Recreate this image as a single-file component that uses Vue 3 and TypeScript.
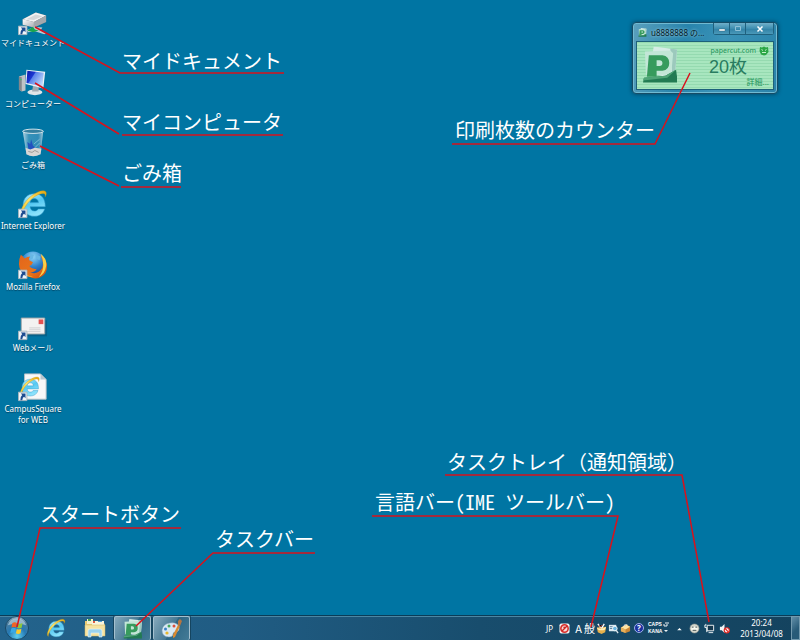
<script setup lang="ts">
interface Shortcut {
  id: string
  label: string
  linked: boolean
}

interface Callout {
  text: string
  x: number
  y: number
  lines: string[]
  halfWidth?: boolean
}

interface CalloutLayer {
  anchor: string
  callouts: Callout[]
}

const shortcuts: Shortcut[] = [
  { id: 'documents', label: 'マイドキュメント', linked: true },
  { id: 'computer', label: 'コンピューター', linked: false },
  { id: 'trash', label: 'ごみ箱', linked: false },
  { id: 'ie', label: 'Internet Explorer', linked: true },
  { id: 'firefox', label: 'Mozilla Firefox', linked: true },
  { id: 'mail', label: 'Webメール', linked: true },
  { id: 'campus', label: 'CampusSquare for WEB', linked: true },
]

// Each layer keeps its callouts attached to one corner of the screen.
const layers: CalloutLayer[] = [
  {
    anchor: 'top-left',
    callouts: [
      { text: 'マイドキュメント', x: 122, y: 69, lines: ['35,27 120,73 284,73'] },
      { text: 'マイコンピュータ', x: 122, y: 130, lines: ['35,83 119,134', '122,135 283,135'] },
      { text: 'ごみ箱', x: 122, y: 181, lines: ['40,146 119,186', '121,187 181,187'] },
    ],
  },
  {
    anchor: 'top-right',
    callouts: [
      { text: '印刷枚数のカウンター', x: 455, y: 138, lines: ['690,73 655,144 452,144'] },
    ],
  },
  {
    anchor: 'bottom-right',
    callouts: [
      { text: 'タスクトレイ（通知領域）', x: 447, y: 470, lines: ['445,475 682,475 709,622'] },
      { text: '言語バー(IME ツールバー)', x: 375, y: 510, lines: ['372,516 618,516 591,627'], halfWidth: true },
    ],
  },
  {
    anchor: 'bottom-left',
    callouts: [
      { text: 'スタートボタン', x: 40, y: 522, lines: ['181,528 40,528 17,627'] },
      { text: 'タスクバー', x: 215, y: 547, lines: ['315,553 213,553 136,626'] },
    ],
  },
]
</script>

<template>
  <div class="screen" lang="ja">
    <svg class="defs" width="0" height="0" aria-hidden="true">
      <defs>
        <linearGradient id="gSilver" x1="0" y1="0" x2="1" y2="1">
          <stop offset="0" stop-color="#ffffff" /><stop offset="1" stop-color="#a9adb3" />
        </linearGradient>
        <linearGradient id="gMonitor" x1="0" y1="0" x2="1" y2="0.6">
          <stop offset="0" stop-color="#0a1aa8" /><stop offset="0.4" stop-color="#1c37d2" />
          <stop offset="0.45" stop-color="#5b83ea" /><stop offset="1" stop-color="#b9d6fb" />
        </linearGradient>
        <linearGradient id="gIe" x1="0" y1="0" x2="0.4" y2="1">
          <stop offset="0" stop-color="#b8f0ff" /><stop offset="0.5" stop-color="#55c8f2" />
          <stop offset="1" stop-color="#8de2fb" />
        </linearGradient>
        <linearGradient id="gGold" x1="0" y1="1" x2="1" y2="0">
          <stop offset="0" stop-color="#f6c21c" /><stop offset="0.5" stop-color="#ffe36a" />
          <stop offset="1" stop-color="#e3a50c" />
        </linearGradient>
        <radialGradient id="gGlobe" cx="0.5" cy="0.2" r="0.8">
          <stop offset="0" stop-color="#8fd6f7" /><stop offset="0.5" stop-color="#2b7fcb" />
          <stop offset="1" stop-color="#123a86" />
        </radialGradient>
        <linearGradient id="gFox" x1="0" y1="0" x2="1" y2="1">
          <stop offset="0" stop-color="#e2641c" /><stop offset="0.6" stop-color="#e8741a" />
          <stop offset="1" stop-color="#c8480e" />
        </linearGradient>
        <linearGradient id="gGlass" x1="0" y1="0" x2="1" y2="0">
          <stop offset="0" stop-color="#d4e6ee" stop-opacity="0.9" />
          <stop offset="0.3" stop-color="#4c9ec4" stop-opacity="0.7" />
          <stop offset="0.75" stop-color="#4595be" stop-opacity="0.7" />
          <stop offset="1" stop-color="#b9d4e0" stop-opacity="0.9" />
        </linearGradient>
        <radialGradient id="gOrb" cx="0.5" cy="0.85" r="0.85">
          <stop offset="0" stop-color="#5fd0ef" /><stop offset="0.45" stop-color="#2579b4" />
          <stop offset="0.8" stop-color="#4a7d9f" /><stop offset="1" stop-color="#9dbccd" />
        </radialGradient>

        <symbol id="s-ie" viewBox="0 0 32 32">
          <path d="M29 19.5H12.2c.4 3 2.1 4.7 4.8 4.7 2 0 3.300-.8 4.200-2.300h7.100C26.700 27.200 22.600 30 17 30 9.400 30 4.500 25.200 4.500 17.800 4.500 10.300 9.500 5.200 16.900 5.200c7.800 0 12.300 5 12.100 14.300zM21.500 15c-.3-2.900-2-4.500-4.600-4.500-2.600 0-4.200 1.600-4.700 4.500z" fill="url(#gIe)" stroke="#2b98ca" stroke-width=".6" />
          <path d="M3.600 29.500C-.5 26 4.700 15 13 8.300 20 2.600 27.500.6 29.500 3c1 1.300.7 3.300-.5 5.600.2-2 0-3-1.200-3.500-3-1.200-8.800 1.600-13.600 5.700C7.600 16.400 3.700 24.500 3.600 29.500z" fill="url(#gGold)" stroke="#d09608" stroke-width=".4" />
        </symbol>
        <symbol id="s-papercut" viewBox="0 0 36 38">
          <path d="M11 0 35 3l-2 25-6 4L7 27z" fill="#d6ece6" />
          <path d="M28 2 35 3l-2 25-3 1z" fill="#9cc9bd" />
          <path d="M2 5 28 4l3 3-2 22H3z" fill="#c2e6d6" />
          <path d="M6 9h14q7 1 7 8t-7 8h-6v6H4zM14 14v6h3q3 0 3-3t-3-3z" fill="#379b5d" fill-rule="evenodd" />
          <path d="m1 32 22-2 11-6 1 7v6H0z" fill="#227b53" />
          <path d="m1 32 22-2 11-6-9 8-25 3z" fill="#4fa577" />
        </symbol>
      </defs>
    </svg>

    <main class="desktop">
      <div class="shortcuts">
        <button v-for="item in shortcuts" :key="item.id" type="button" class="shortcut">
          <svg class="shortcut-icon" viewBox="0 0 32 32" aria-hidden="true">
            <g v-if="item.id === 'documents'">
              <path d="M5 14 19 7l11 3v7l-13 6-12-3z" fill="#646a70" />
              <path d="M5 14 19 7l11 3-13 7z" fill="#f1f2f3" />
              <path d="m9 14 10-5 7 2-9 4z" fill="#d4d7da" />
              <path d="m5 14 12 3v6L5 20z" fill="url(#gSilver)" />
              <path d="m17 17 13-7v7l-13 6z" fill="#a3a8ad" />
              <path d="m9 26 8-4 9 1-2 3 6 3-2 1-10-3-7 1z" fill="#b8cdd4" />
              <path d="m10 26 6-4 2 3 4 1-6 2z" fill="#19a550" />
            </g>
            <g v-else-if="item.id === 'computer'">
              <path d="m1 10 7-2v17l-4 1-3-2z" fill="#bfc3c6" /><path d="m1 10 3 1v15l-3-2z" fill="#83878c" />
              <path d="M2 13h2v1H2z" fill="#2ad35b" />
              <ellipse cx="18" cy="27" rx="8" ry="3" fill="#dfe4e7" />
              <path d="m16 20 6 1v5h-7z" fill="#a2abb3" />
              <path d="m9 3 20 2-2 18L8 18z" fill="#eef3f7" />
              <path d="m10 4 17.500 2L26 21 9 17z" fill="url(#gMonitor)" />
            </g>
            <g v-else-if="item.id === 'trash'">
              <path d="m5 3 22 0-3 25q-8 4-15 0z" fill="url(#gGlass)" />
              <ellipse cx="16" cy="3.500" rx="11" ry="2.300" fill="#357f9f" stroke="#dce9ee" />
              <path d="m11 22-1-7 3 2 1-5 2 7 3 2-2 4z" fill="#2352bf" />
              <path d="m17 17 6-5M18 21l5-5" stroke="#9fcfe2" stroke-width=".7" />
              <path d="m8 21 5 2 5-2 7 1-1 6q-8 4-15 0z" fill="#d9d6d4" />
              <path d="m11 25 4 1 3-2 4 2" stroke="#9b9794" fill="none" />
            </g>
            <use v-else-if="item.id === 'ie'" href="#s-ie" x="1" y="0" width="31" height="31" />
            <g v-else-if="item.id === 'firefox'">
              <circle cx="16" cy="15.500" r="13.800" fill="url(#gGlobe)" />
              <path d="m12 4 5 1-1 4-5 2zM19 5l5 2-1 4-4-2z" fill="#67b7e4" />
              <path d="M3 5q2 1 4 4 3-2 6-2-2 2-1 4l4 2q-1 3-4 4 3 4 8 3-2 4-7 4 8 3 13-5 2-6-2-13 7 4 7 11 0 9-7 12-7 3-13-1Q1 24 1 15 1 9 3 5z" fill="url(#gFox)" />
              <path d="M24 4q7 5 6 13-1 8-8 12 5-6 5-13 0-7-3-12z" fill="#f8cf48" />
              <path d="M3 20q4 8 13 8-9 3-13-8z" fill="#f7a72b" />
            </g>
            <g v-else-if="item.id === 'mail'">
              <path d="M6 10h25v17H6z" fill="#07547a" opacity=".6" />
              <path d="M3.500 7.500h25v17h-25z" fill="#f3f2f1" stroke="#a4a7a9" />
              <path d="M22 9h5v5h-5z" fill="#e25252" /><path d="M12 18h12M12 20h12M10 22h14" stroke="#cfd0d1" />
            </g>
            <g v-else>
              <path d="M7 2h17l6 6v21H7z" fill="#f7f8f8" stroke="#b8c0c5" />
              <path d="M24 2v6h6z" fill="#b7c6cf" />
              <use href="#s-ie" x="1" y="4" width="23" height="23" />
            </g>
            <g v-if="item.linked">
              <path d="M.5 21.500h9v9h-9z" fill="#eff4f8" stroke="#a8b4bd" />
              <path d="M3 23h5v5l-1.500-1.500Q5 27 4.500 30H2.500q0-4 2-5.500z" fill="#1d4c90" />
            </g>
          </svg>
          <span class="shortcut-label">{{ item.label }}</span>
        </button>
      </div>

      <section class="counter" aria-label="u8888888">
        <header class="counter-bar">
          <svg class="counter-icon" viewBox="0 0 36 38" aria-hidden="true"><use href="#s-papercut" /></svg>
          <h1 class="counter-title">u8888888 の...</h1>
          <div class="controls">
            <button type="button" class="control" aria-label="最小化">
              <svg viewBox="0 0 8 8"><path d="M1 4h6v2H1z" fill="#fff" stroke="#355a70" stroke-width=".4" /></svg>
            </button>
            <button type="button" class="control" aria-label="最大化">
              <svg viewBox="0 0 8 8"><path d="M1.500 1.500h5v4h-5z" fill="none" stroke="#8fc0d6" /></svg>
            </button>
            <button type="button" class="control close" aria-label="閉じる">
              <svg viewBox="0 0 8 8"><path d="m1.500 1.500 5 5m0-5-5 5" stroke="#fff" stroke-width="1.500" /></svg>
            </button>
          </div>
        </header>
        <div class="counter-body">
          <svg class="counter-logo" viewBox="0 0 36 38" aria-hidden="true"><use href="#s-papercut" /></svg>
          <div class="counter-info">
            <a class="brand" href="#papercut">
              papercut.com
              <svg class="brand-icon" viewBox="0 0 10 10" aria-hidden="true">
                <path d="m1 1 2 .5L5 .5l2 1L9 1l.5 5L7 9 5 9.500 2 8.500.5 5z" fill="#2ba746" />
                <path d="m2.500 3.500 1.500 1M7.500 3.500 6 4.500M3 6.500h4" stroke="#c2f0c8" />
              </svg>
            </a>
            <p class="count">20枚</p>
            <a class="details" href="#details">詳細...</a>
          </div>
        </div>
      </section>
    </main>

    <footer class="taskbar">
      <button type="button" class="start" aria-label="スタート">
        <svg viewBox="0 0 26 26" aria-hidden="true">
          <circle cx="13" cy="13" r="12.500" fill="url(#gOrb)" stroke="#174664" />
          <path d="M3 10Q5 3 13 2.500 21 3 23 10q-10-3-20 0z" fill="#d5e5ed" opacity=".55" />
          <path d="M8 7.500q2.500-1.500 5 0l-1 5q-2.500-1.300-5 0z" fill="#ef6326" />
          <path d="M14 8q2.500 1.200 5-.3l-1 5q-2.500 1.300-5 0z" fill="#8cc63c" />
          <path d="M6.800 13.500q2.500-1.300 5 0l-1 5q-2.500-1.300-5 0z" fill="#38a9e6" />
          <path d="M12.800 14q2.500 1.200 5-.2l-1 5q-2.500 1.300-5 0z" fill="#fbc92b" />
        </svg>
      </button>
      <div class="tasks">
        <button type="button" class="task" aria-label="Internet Explorer">
          <svg viewBox="0 0 32 32" aria-hidden="true"><use href="#s-ie" /></svg>
        </button>
        <button type="button" class="task" aria-label="エクスプローラー">
          <svg viewBox="0 0 22 20" aria-hidden="true">
            <path d="M1 3h7l1 2h11l1 2v11H1z" fill="#e9cc74" />
            <path d="M3 1h6v5H3z" fill="#f5f0cd" /><path d="M4 1h3v2H4z" fill="#3f9d4d" />
            <path d="M8 3h12v6H8z" fill="#f8f5dc" /><path d="M9 3h2v2H9z" fill="#dd5d42" /><path d="M14 3h4v1h-4z" fill="#59a2d5" />
            <path d="M1 7h20v11H1z" fill="#f5e3a1" stroke="#d7b763" stroke-width=".5" />
            <path d="M4 19v-6q0-2 2-2h10q2 0 2 2v6h-3v-4H7v4z" fill="#9bd3ee" stroke="#e8f7fd" stroke-width=".6" />
          </svg>
        </button>
        <button type="button" class="task open" aria-label="PaperCut">
          <svg viewBox="0 0 36 38" aria-hidden="true"><use href="#s-papercut" /></svg>
        </button>
        <button type="button" class="task open" aria-label="ペイント">
          <svg viewBox="0 0 22 20" aria-hidden="true">
            <path d="M1 11Q2 5 9 4q7-1 9 4 1 4-3 5-3 0-3 2 0 3-4 3-7 0-7-7z" fill="#d9e9f4" stroke="#8da9bd" stroke-width=".5" />
            <circle cx="4.500" cy="10" r="1.500" fill="#3e82c4" /><circle cx="8" cy="7" r="1.500" fill="#46a85c" />
            <circle cx="13" cy="7" r="1.500" fill="#dc4f3c" /><circle cx="6" cy="14" r="1.600" fill="#e7b72d" />
            <path d="m12 16 5-10 2 1-5 11-2 1z" fill="#d98a31" /><path d="m17 6 0-4 2-2 2 2-2 5z" fill="#b77540" />
          </svg>
        </button>
      </div>

      <div class="language">
        <span class="lang-code">JP</span>
        <button type="button" class="tray-icon ime" aria-label="IME">
          <svg viewBox="0 0 12 12"><rect x=".5" y=".5" width="11" height="11" rx="2" fill="#f4f1f0" /><circle cx="6" cy="6" r="4" fill="#f6dbd7" stroke="#d92e2a" stroke-width="1.700" /><path d="m3 9 6-6M5 4l2 2" fill="none" stroke="#cc2825" stroke-width="1.500" /></svg>
        </button>
        <span class="mode">A</span>
        <span class="mode">般</span>
        <button type="button" class="tray-icon" aria-label="変換モード">
          <svg viewBox="0 0 12 12"><path d="m1 5 10-1-1 6-4 2-4-2z" fill="#e8b14c" /><path d="m2 1 3 4M9 1 6 6" stroke="#fff" stroke-width="1.500" /><path d="M1 5q5 3 10-1l-1 3q-4 2-8 0z" fill="#fff0bc" /><path d="m3 3 2 1 2-2" stroke="#d64d35" /></svg>
        </button>
        <button type="button" class="tray-icon" aria-label="IME パッド">
          <svg viewBox="0 0 12 12"><path d="M1 2h8v7H1z" fill="#dce8f0" /><path d="M2 4h3M2 6h3" stroke="#547d9d" /><circle cx="7.500" cy="6" r="2.500" fill="#6ab5e2" stroke="#f4f8fa" /><path d="m9 8 2 3" stroke="#dbe5eb" stroke-width="1.500" /></svg>
        </button>
        <button type="button" class="tray-icon" aria-label="ツール">
          <svg viewBox="0 0 12 12"><path d="m1 5 6-3 4 2v5l-5 2-5-2z" fill="#c98637" /><path d="m1 5 6-3 4 2-5 3z" fill="#ffe3a0" /><path d="m1 5 5 2v4L1 9z" fill="#e8b05a" /><path d="m4 4 1-2 3 0" stroke="#eee" fill="none" /></svg>
        </button>
        <button type="button" class="help" aria-label="ヘルプ">?</button>
        <span class="locks"><span>CAPS</span><span>KANA</span></span>
        <svg class="lang-options" viewBox="0 0 6 12" aria-hidden="true"><path d="M2 1h4M1 2v2h3V2" stroke="#e9f1f5" fill="none" /><path d="M1 8h4L3 10z" fill="#e9f1f5" /></svg>
      </div>

      <div class="tray">
        <button type="button" class="tray-icon" aria-label="隠れているインジケーター">
          <svg viewBox="0 0 12 12"><path d="M3.500 8h5L6 5.500z" fill="#fff" /></svg>
        </button>
        <button type="button" class="tray-icon" aria-label="通知">
          <svg viewBox="0 0 12 12"><circle cx="6" cy="6" r="5" fill="#d5d7cc" stroke="#8f978f" stroke-width=".6" /><path d="M2.500 4h7v4h-7z" fill="#fafaf0" /><path d="M3 4.500h2m2 0h2M4 8h4" stroke="#3c4c4c" /></svg>
        </button>
        <button type="button" class="tray-icon" aria-label="ネットワーク">
          <svg viewBox="0 0 12 12"><path d="M3.500 2.500h7v6h-7zM5 10.500h5" fill="#16394f" stroke="#f6f8f9" /><path d="M1 2v3h2v5" fill="none" stroke="#fff" /><path d="M2 1v2" stroke="#fff" /></svg>
        </button>
        <button type="button" class="tray-icon" aria-label="ミュート">
          <svg viewBox="0 0 12 12"><path d="M1 4h2l3-3v10L3 8H1z" fill="#f2f5f6" /><circle cx="8.500" cy="8" r="2.800" fill="#fff" stroke="#e02824" stroke-width="1.300" /><path d="m6.700 6 3.600 4" stroke="#e02824" stroke-width="1.300" /></svg>
        </button>
      </div>
      <div class="clock"><time>20:24</time><time>2013/04/08</time></div>
      <button type="button" class="show-desktop" aria-label="デスクトップの表示"></button>
    </footer>

    <svg v-for="layer in layers" :key="layer.anchor" class="callouts" :class="layer.anchor" viewBox="0 0 800 640">
      <g v-for="callout in layer.callouts" :key="callout.text">
        <polyline v-for="line in callout.lines" :key="line" class="leader" :points="line" />
        <text class="callout-text" :class="{ 'half-width': callout.halfWidth }" :x="callout.x" :y="callout.y">{{ callout.text }}</text>
      </g>
    </svg>
  </div>
</template>

<style>
body {
  margin: 0;
  background: #0075a3;
}
</style>

<style scoped>
.screen {
  position: relative;
  display: flex;
  flex-direction: column;
  min-height: 100vh;
  overflow: hidden;
  background: #0075a3;
  color: #fff;
  font-family: "Noto Sans", "Noto Sans CJK JP", sans-serif;
  font-size: 8px;
  line-height: 11px;
}

.defs {
  position: absolute;
}

button {
  margin: 0;
  padding: 0;
  border: 0;
  background: none;
  color: inherit;
  font: inherit;
}

svg {
  display: block;
}

.desktop {
  position: relative;
  flex: 1;
}

.shortcuts {
  display: flex;
  flex-direction: column;
  align-items: flex-start;
  gap: 18px;
  padding-top: 5px;
}

.shortcut {
  display: flex;
  flex-direction: column;
  align-items: center;
  width: 66px;
}

.shortcut-icon {
  width: 30px;
  height: 32px;
}

.shortcut-label {
  text-align: center;
  text-shadow: 0 1px 1px #00415f;
}

.counter {
  position: absolute;
  top: 22px;
  right: 22px;
  box-sizing: border-box;
  width: 146px;
  padding: 0 3px 3px;
  border: 1px solid #164c66;
  border-radius: 4px;
  background: linear-gradient(100deg, #5aa0bd, #2884ac 35%, #3b93b8 60%, #2a83aa);
  box-shadow: inset 0 0 0 1px #70bad2, 0 0 4px #083e58;
}

.counter-bar {
  display: flex;
  align-items: center;
  height: 18px;
}

.counter-icon {
  width: 9px;
  height: 9px;
  margin: 0 4px 0 2px;
}

.counter-title {
  flex: 1;
  margin: 0;
  color: #041a26;
  font-size: 8px;
  font-weight: 400;
  white-space: nowrap;
  text-shadow: 0 0 3px #b4dcea;
}

.controls {
  display: flex;
  align-self: flex-start;
  border: 1px solid #1f617e;
  border-top: 0;
  border-radius: 0 0 3px 3px;
}

.control {
  display: grid;
  place-items: center;
  width: 16px;
  height: 11px;
  border-right: 1px solid #1f617e;
  background: linear-gradient(#70b0ca, #3e8eb0 50%, #2f7fa4 50%, #4a99b9);
}

.control svg {
  width: 8px;
  height: 8px;
}

.close {
  width: 27px;
  border-right: 0;
}

.counter-body {
  display: flex;
  justify-content: space-between;
  height: 47px;
  border: 1px solid #d4f6e2;
  outline: 1px solid #1d617a;
  outline-offset: -1px;
  background: repeating-linear-gradient(#95dab0 0 1px, #a8e6bf 1px 3px);
}

.counter-logo {
  width: 35px;
  height: 38px;
  margin: 4px 0 0 6px;
}

.counter-info {
  display: flex;
  flex-direction: column;
  align-items: flex-end;
  padding: 3px 4px 0 0;
}

.brand,
.details {
  color: #23955a;
  text-decoration: none;
}

.brand {
  display: flex;
  align-items: center;
  gap: 3px;
  font-size: 7px;
}

.brand-icon {
  width: 10px;
  height: 10px;
}

.count {
  margin: 0 22px 0 0;
  color: #287c60;
  font-family: "Liberation Sans", "Noto Sans CJK JP", sans-serif;
  font-size: 18px;
  line-height: 22px;
}

.details {
  line-height: 8px;
}

.taskbar {
  display: flex;
  align-items: stretch;
  height: 24px;
  border-top: 1px solid #0a3c58;
  background: linear-gradient(#4b86a3 0 1px, transparent 1px), linear-gradient(90deg, #23638c, #205c83 30%, #184d6d 60%, #14435f);
}

.start {
  width: 26px;
  margin-left: 4px;
}

.start svg {
  width: 26px;
  height: 24px;
}

.tasks {
  display: flex;
  flex: 1;
}

.task {
  display: grid;
  place-items: center;
  box-sizing: border-box;
  width: 39px;
}

.task svg {
  width: 22px;
  height: 20px;
}

.tasks .task:first-child {
  margin-left: 6px;
}

.open {
  width: 37px;
  margin-right: 2px;
  border: 1px solid #a4c0cf;
  border-bottom: 0;
  border-radius: 2px;
  background: linear-gradient(120deg, #86a9bc, #467994 50%, #2d6684 52%, #447b97);
  box-shadow: 0 0 0 1px #154560;
}

.language,
.tray {
  display: flex;
  align-items: center;
}

.tray-icon {
  width: 12px;
  height: 12px;
}

.tray-icon svg {
  width: 11px;
  height: 11px;
  margin: 0 auto;
}

.lang-code {
  width: 12px;
}

.ime {
  margin-right: 3px;
}

.mode {
  width: 11px;
  font-family: "Noto Sans CJK JP", sans-serif;
  font-size: 11px;
  text-align: center;
}

.help {
  width: 10px;
  height: 10px;
  margin: 0 4px 0 3px;
  border: 1px solid #9db1e9;
  border-radius: 50%;
  background: #1b2f9d;
  font-weight: 700;
  line-height: 8px;
}

.locks {
  display: flex;
  flex-direction: column;
  width: 15px;
  font-family: "Liberation Sans", sans-serif;
  font-size: 5px;
  font-weight: 700;
  line-height: 7px;
}

.lang-options {
  width: 6px;
  height: 12px;
}

.tray {
  gap: 3px;
  margin-left: 4px;
}

.clock {
  display: flex;
  flex-direction: column;
  align-items: center;
  justify-content: center;
  width: 59px;
  padding-left: 2px;
}

.show-desktop {
  width: 9px;
  border: 1px solid #739aae;
  background: linear-gradient(135deg, #628fa8, #285b78 60%);
}

.callouts {
  position: absolute;
  width: 800px;
  height: 640px;
  pointer-events: none;
}

.top-left {
  top: 0;
  left: 0;
}

.top-right {
  top: 0;
  right: 0;
}

.bottom-left {
  bottom: 0;
  left: 0;
}

.bottom-right {
  right: 0;
  bottom: 0;
}

.leader {
  fill: none;
  stroke: #d8121c;
  stroke-width: 1.5;
}

.callout-text {
  fill: #fff;
  font-family: "Noto Sans CJK JP", sans-serif;
  font-size: 20px;
}

.half-width {
  font-feature-settings: "hwid";
}
</style>
